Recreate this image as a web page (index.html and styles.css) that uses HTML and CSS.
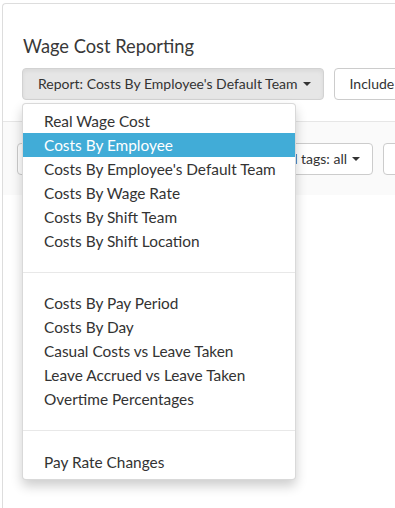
FILE: index.html
```html
<!DOCTYPE html>
<html>
<head>
<meta charset="utf-8">
<link rel="stylesheet" href="styles.css">
</head>
<body>
<div class="panel">
  <div class="head">
    <h2 class="title">Wage Cost Reporting</h2>
    <div class="toolbar">
      <button class="btn btn-active">Report: Costs By Employee's Default Team <span class="caret"></span></button>
      <button class="btn">Include leave</button>
      <ul class="menu">
        <li>Real Wage Cost</li>
        <li class="active">Costs By Employee</li>
        <li>Costs By Employee's Default Team</li>
        <li>Costs By Wage Rate</li>
        <li>Costs By Shift Team</li>
        <li>Costs By Shift Location</li>
        <li class="divider"></li>
        <li>Costs By Pay Period</li>
        <li>Costs By Day</li>
        <li>Casual Costs vs Leave Taken</li>
        <li>Leave Accrued vs Leave Taken</li>
        <li>Overtime Percentages</li>
        <li class="divider"></li>
        <li>Pay Rate Changes</li>
      </ul>
    </div>
  </div>
  <div class="band">
    <button class="btn btn-wide">Filter by shift skill tags: all <span class="caret"></span></button>
    <button class="btn">Export</button>
  </div>
</div>
</body>
</html>
```
FILE: styles.css
```css
html, body {
  margin: 0;
  padding: 0;
  background: #fff;
  overflow: hidden;
}
body {
  font-family: Lato, "Open Sans", sans-serif;
  color: #333;
}
.panel {
  margin: 3px 0 0 2px;
  width: 600px;
  height: 600px;
  border: 1px solid #dddddd;
  border-right: none;
  border-top-left-radius: 4px;
}
.head {
  padding: 32px 0 21px 19px;
}
.title {
  margin: 0 0 12px 1px;
  font-size: 18.3px;
  line-height: 20px;
  font-weight: 400;
  color: #383838;
}
.toolbar {
  position: relative;
  display: flex;
  gap: 10px;
}
.btn {
  font-family: inherit;
  font-size: 14px;
  line-height: 20px;
  color: #333;
  background: #fff;
  border: 1px solid #cccccc;
  border-radius: 4px;
  padding: 5px 12px 5px 15px;
  white-space: nowrap;
  display: flex;
  align-items: center;
  margin: 0;
}
.btn-active {
  background: #e6e6e6;
  border-color: #d2d2d2;
  box-shadow: inset 0 2px 4px rgba(0, 0, 0, 0.06);
}
.caret {
  display: inline-block;
  width: 0;
  height: 0;
  margin-left: 5px;
  border-top: 4px solid #333;
  border-left: 4px solid transparent;
  border-right: 4px solid transparent;
}
.menu {
  position: absolute;
  top: 35px;
  left: 0;
  width: 272px;
  margin: 0;
  padding: 5px 0;
  list-style: none;
  background: #fff;
  border: 1px solid rgba(0, 0, 0, 0.15);
  border-radius: 4px;
  box-shadow: 0 6px 12px rgba(0, 0, 0, 0.2);
  z-index: 10;
}
.menu li {
  font-size: 15.4px;
  line-height: 24px;
  padding: 0 20px 0 21px;
  color: #333;
  white-space: nowrap;
}
.menu li.active {
  background: #41acd7;
  color: #fff;
}
.menu li.divider {
  height: 1px;
  padding: 0;
  margin: 18.7px 0;
  background: #e8e8e8;
}
.band {
  border-top: 1px solid #e6e6e6;
  background: #fafafa;
  padding: 21px 0 20px 14px;
  display: flex;
  gap: 10px;
}
.btn-wide {
  width: 356px;
  justify-content: flex-end;
}
```
